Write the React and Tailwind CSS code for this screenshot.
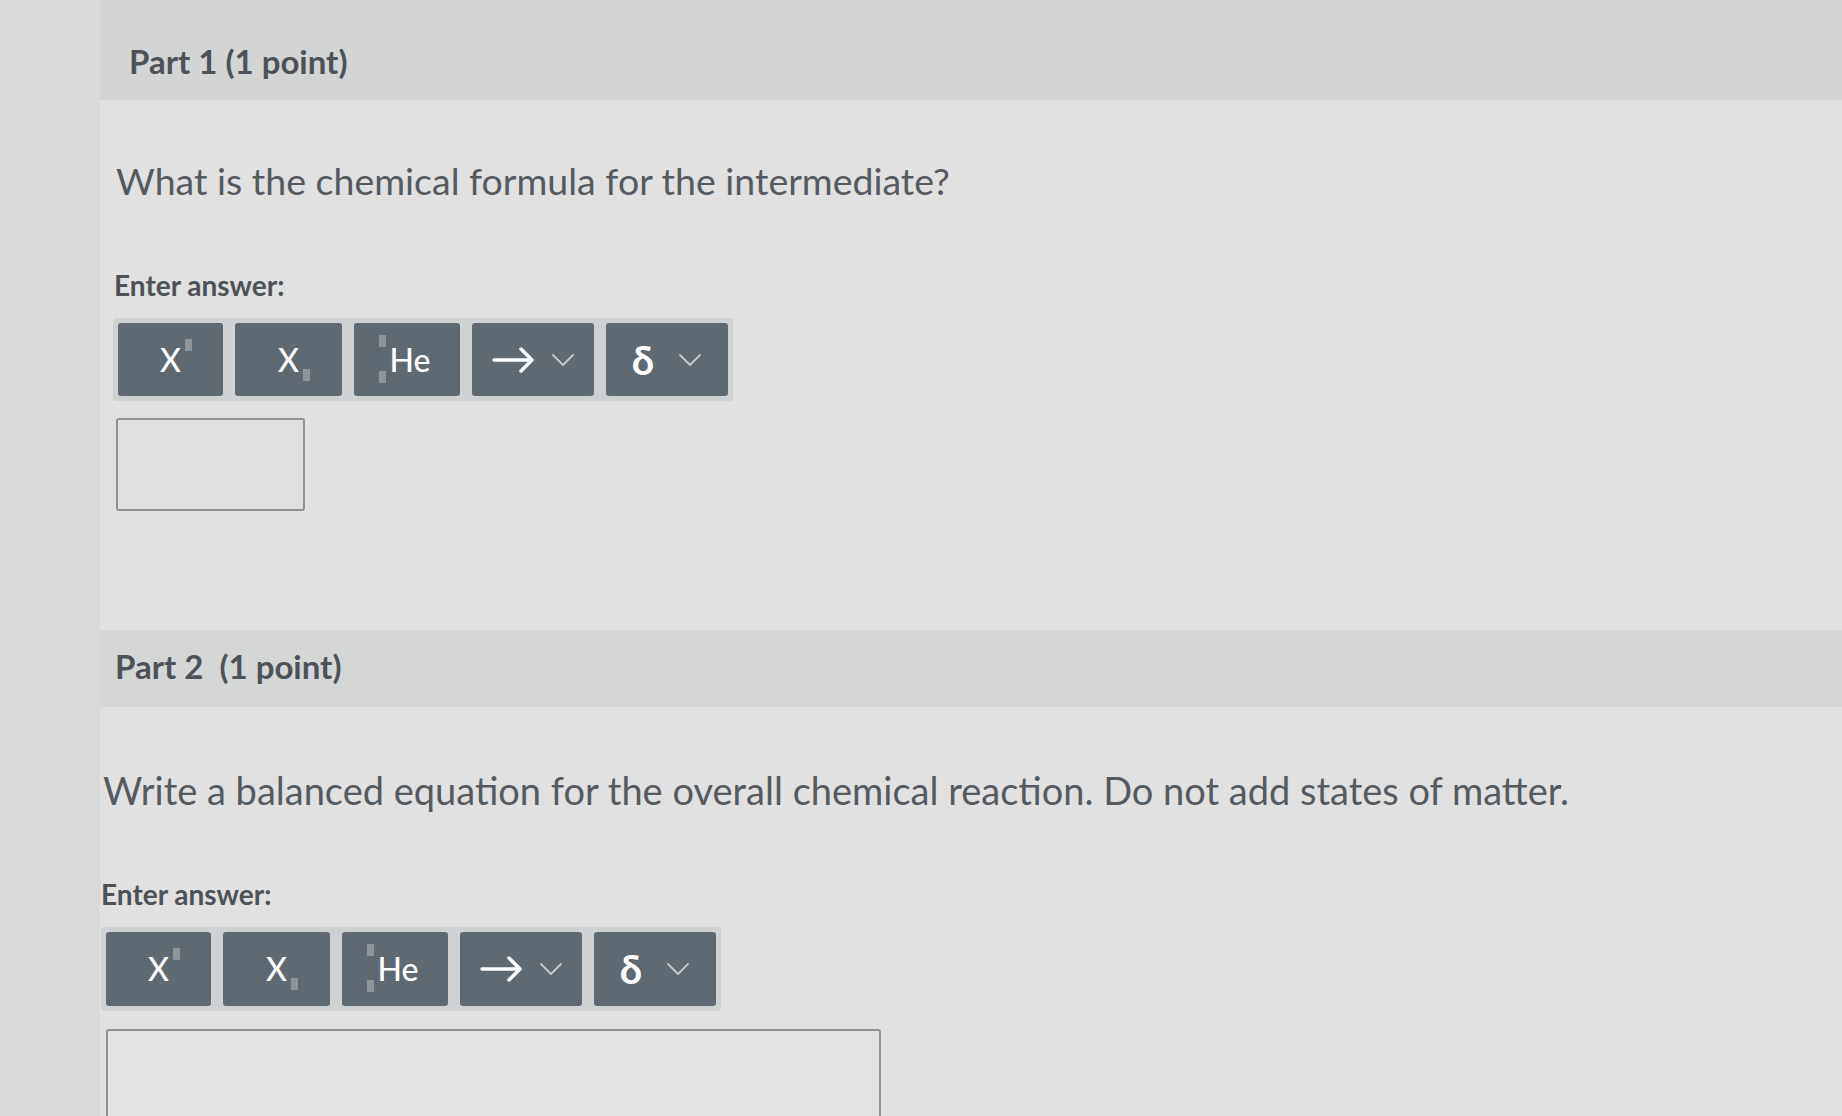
import React from 'react';

const Slot = ({ className = '' }) => (
  <span className={`inline-block w-[7px] h-[12px] bg-[#8c959c] ${className}`}></span>
);

const Chevron = () => (
  <svg width="24" height="14" viewBox="0 0 24 14" fill="none" stroke="#c3c9cd" strokeWidth="1.8" strokeLinecap="round" strokeLinejoin="round">
    <path d="M2 2l10 10 10-10" />
  </svg>
);

const Arrow = () => (
  <svg width="46" height="28" viewBox="0 0 46 28" fill="none" stroke="#ffffff" strokeWidth="3.5" strokeLinecap="round" strokeLinejoin="round">
    <path d="M3 14h38M30 3l11 11-11 11" />
  </svg>
);

function Toolbar({ tall }) {
  const h = tall ? 'h-[74px]' : 'h-[73px]';
  return (
    <div className="inline-flex gap-[12px] p-[5px] bg-[#cfd2d2] rounded-[3px]">
      <button className={`${h} w-[105px] rounded-[3px] bg-[#5f6971] text-white text-[32px] font-medium flex items-center justify-center`}>
        <span className="relative">X<Slot className="absolute -right-[11px] top-[3px]" /></span>
      </button>
      <button className={`${h} w-[107px] rounded-[3px] bg-[#5f6971] text-white text-[32px] font-medium flex items-center justify-center`}>
        <span className="relative">X<Slot className="absolute -right-[11px] bottom-[3px]" /></span>
      </button>
      <button className={`${h} w-[106px] rounded-[3px] bg-[#5f6971] text-white text-[32px] font-medium flex items-center justify-center`}>
        <span className="relative pl-[6px]">
          <Slot className="absolute -left-[5px] -top-[1px]" />
          <Slot className="absolute -left-[5px] bottom-[1px]" />
          He
        </span>
      </button>
      <button className={`${h} w-[122px] rounded-[3px] bg-[#5f6971] flex items-center justify-center gap-[14px]`}>
        <Arrow />
        <Chevron />
      </button>
      <button className={`${h} w-[122px] rounded-[3px] bg-[#5f6971] text-white text-[40px] font-bold flex items-center justify-center gap-[24px]`}>
        <span className="leading-none">δ</span>
        <Chevron />
      </button>
    </div>
  );
}

export default function App() {
  return (
    <div className="h-[1116px] w-full overflow-hidden bg-[#d8dada] font-['Lato','Open_Sans',sans-serif] text-[#4d5258]">
      <div className="ml-[100px] h-full bg-[#e0e1e0]">
        {/* Part 1 */}
        <div className="h-[100px] bg-[#d3d5d5] flex items-center pl-[29px] pt-[22px]">
          <h2 className="text-[33px] font-bold leading-none">Part 1 (1 point)</h2>
        </div>

        <p className="mt-[59px] pl-[16px] text-[37.5px] leading-[44px] text-[#555a60]">
          What is the chemical formula for the intermediate?
        </p>

        <p className="mt-[65px] pl-[14px] text-[28px] leading-[34px] font-bold">Enter answer:</p>

        <div className="mt-[16px] ml-[13px]">
          <Toolbar />
        </div>

        <div className="mt-[17px] ml-[16px] w-[189px] h-[93px] border-2 border-[#8d9296] rounded-[3px] bg-[#dfe0df]"></div>

        {/* Part 2 */}
        <div className="mt-[119px] h-[77px] bg-[#d5d7d7] flex items-center pl-[15px] pb-[4px]">
          <h2 className="text-[33px] font-bold leading-none">Part 2<span className="ml-[16px]">(1 point)</span></h2>
        </div>

        <p className="mt-[61px] pl-[3px] text-[38px] leading-[44px] text-[#555a60]">
          Write a balanced equation for the overall chemical reaction. Do not add states of matter.
        </p>

        <p className="mt-[65px] pl-[1px] text-[28px] leading-[34px] font-bold">Enter answer:</p>

        <div className="mt-[16px] ml-[1px]">
          <Toolbar tall />
        </div>

        <div className="mt-[18px] ml-[6px] w-[775px] h-[150px] border-2 border-[#8d9296] rounded-[3px] bg-[#e2e3e1]"></div>
      </div>
    </div>
  );
}
